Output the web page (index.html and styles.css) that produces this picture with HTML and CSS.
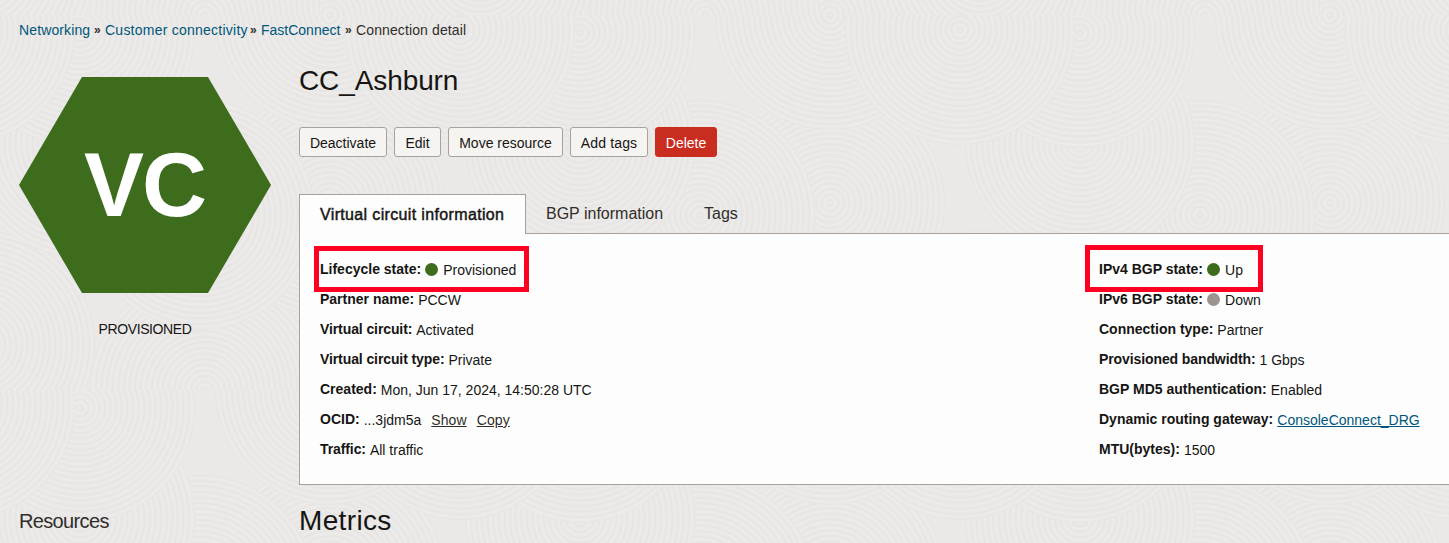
FILE: index.html
```html
<!DOCTYPE html>
<html lang="en">
<head>
<meta charset="utf-8">
<title>Connection detail</title>
<link rel="stylesheet" href="styles.css">
</head>
<body>
<svg class="texture" width="1449" height="543" aria-hidden="true">
  <defs>
    <radialGradient id="ring" gradientUnits="userSpaceOnUse" cx="0" cy="0" r="5.6" spreadMethod="repeat">
      <stop offset="0" stop-color="#edecea"/><stop offset=".5" stop-color="#e6e5e3"/><stop offset="1" stop-color="#edecea"/>
    </radialGradient>
    <circle id="swirl" r="115" fill="url(#ring)"/>
    <pattern id="sand" width="500" height="375" patternUnits="userSpaceOnUse" x="-170" y="15">
      <rect width="500" height="375" fill="#eae9e7"/>
      <use href="#swirl" x="0" y="375"/><use href="#swirl" x="500" y="375"/>
      <use href="#swirl" x="375" y="375"/><use href="#swirl" x="150" y="330"/>
      <use href="#swirl" x="0" y="188"/><use href="#swirl" x="500" y="188"/>
      <use href="#swirl" x="370" y="200"/><use href="#swirl" x="250" y="128"/>
      <use href="#swirl" x="0" y="0"/><use href="#swirl" x="500" y="0"/>
      <use href="#swirl" x="250" y="18"/><use href="#swirl" x="130" y="15"/>
    </pattern>
  </defs>
  <rect width="1449" height="543" fill="url(#sand)"/>
</svg>
<div class="page">
  <nav class="crumbs">
    <a class="crumb-1">Networking</a><i>»</i><a class="crumb-2">Customer connectivity</a><i>»</i><a class="crumb-3">FastConnect</a><i>»</i><span class="crumb-4">Connection detail</span>
  </nav>
  <div class="layout">
    <aside class="side">
      <div class="hexagon"><span>VC</span></div>
      <div class="status">PROVISIONED</div>
      <h2 class="resources">Resources</h2>
    </aside>
    <main class="main">
      <h1>CC_Ashburn</h1>
      <div class="actions">
        <button class="w-deactivate">Deactivate</button>
        <button class="w-edit">Edit</button>
        <button class="w-move">Move resource</button>
        <button class="w-tags">Add tags</button>
        <button class="w-delete">Delete</button>
      </div>
      <div class="tabs">
        <div class="tab active">Virtual circuit information</div>
        <div class="tab">BGP information</div>
        <div class="tab">Tags</div>
      </div>
      <section class="panel">
        <div class="column">
          <div class="row"><b>Lifecycle state:</b><em class="dot"></em><span>Provisioned</span><div class="mark mark-left"></div></div>
          <div class="row"><b>Partner name:</b><span>PCCW</span></div>
          <div class="row"><b class="tight">Virtual circuit:</b><span>Activated</span></div>
          <div class="row"><b class="tight">Virtual circuit type:</b><span>Private</span></div>
          <div class="row"><b>Created:</b><span>Mon, Jun 17, 2024, 14:50:28 UTC</span></div>
          <div class="row"><b>OCID:</b><span>...3jdm5a</span><a class="tool">Show</a><a class="tool">Copy</a></div>
          <div class="row"><b class="tight">Traffic:</b><span>All traffic</span></div>
        </div>
        <div class="column">
          <div class="row"><b>IPv4 BGP state:</b><em class="dot"></em><span>Up</span><div class="mark mark-right"></div></div>
          <div class="row"><b>IPv6 BGP state:</b><em class="dot down"></em><span>Down</span></div>
          <div class="row"><b>Connection type:</b><span>Partner</span></div>
          <div class="row"><b class="tight">Provisioned bandwidth:</b><span>1 Gbps</span></div>
          <div class="row"><b>BGP MD5 authentication:</b><span>Enabled</span></div>
          <div class="row"><b>Dynamic routing gateway:</b><a class="link">ConsoleConnect_DRG</a></div>
          <div class="row"><b>MTU(bytes):</b><span>1500</span></div>
        </div>
      </section>
      <h2 class="metrics">Metrics</h2>
    </main>
  </div>
</div>
</body>
</html>
```
FILE: styles.css
```css
* { box-sizing: border-box; }
body {
  margin: 0;
  height: 543px;
  overflow: hidden;
  background: #eae9e7;
  color: #161513;
  font: 14px/20px "Liberation Sans", Arial, sans-serif;
}
.texture { position: absolute; top: 0; left: 0; z-index: -1; }
.page { height: 543px; overflow: hidden; }
h1, h2 { margin: 0; font-weight: 400; }

.crumbs { display: flex; height: 60px; padding: 20px 0 0 19px; color: #312d2a; white-space: nowrap; }
.crumbs a { color: #00567a; }
.crumbs i { width: 15px; padding-left: 4px; font-size: 12px; font-style: normal; font-weight: 700; }
.crumb-1 { width: 71px; letter-spacing: .12px; }
.crumb-2 { width: 141px; letter-spacing: .24px; }
.crumb-3 { width: 80px; }
.crumb-4 { letter-spacing: .12px; }

.layout { display: grid; grid-template-columns: 252px 1150px; column-gap: 28px; padding-left: 19px; }
.side { padding-top: 17px; }
.hexagon {
  display: flex;
  align-items: center;
  justify-content: center;
  height: 216px;
  background: #3d6c1d;
  clip-path: polygon(25% 0, 75% 0, 100% 50%, 75% 100%, 25% 100%, 0 50%);
  color: #fff;
  font-size: 90px;
  line-height: 100px;
  font-weight: 700;
  letter-spacing: -2px;
}
.hexagon span { margin: 0 -1px 1px 0; transform: translateX(-1px); }
.status { margin-top: 26px; text-align: center; letter-spacing: -.4px; }
.resources { margin-top: 170px; font-size: 20px; line-height: 24px; letter-spacing: -.65px; color: #312d2a; }

h1 { height: 67px; padding-top: 4px; font-size: 28px; line-height: 34px; letter-spacing: -.1px; }
.actions { display: flex; gap: 7px; height: 67px; }
button {
  height: 30px;
  padding: 2px 0 0;
  border: 1px solid #aaa19d;
  border-radius: 3px;
  background: #f5f4f1;
  color: #161513;
  font: inherit;
  white-space: nowrap;
}
.w-deactivate { width: 88px; }
.w-edit { width: 47px; }
.w-move { width: 115px; }
.w-tags { width: 78px; letter-spacing: .15px; }
.w-delete { width: 62px; border-color: #c92d20; background: #c92d20; color: #fff; }

.tabs { display: flex; height: 39px; font-size: 16px; line-height: 40px; color: #312d2a; }
.tab { width: 158px; padding-left: 20px; white-space: nowrap; }
.tab.active {
  z-index: 1;
  width: 227px;
  height: 40px;
  border: 1px solid #a8a19b;
  border-bottom: 0;
  background: #fdfdfd;
  color: #161513;
  letter-spacing: .35px;
  -webkit-text-stroke: .45px #161513;
}
.panel {
  display: grid;
  grid-template-columns: 779px 351px;
  height: 252px;
  padding: 20px 0 0 20px;
  border: 1px solid #a8a19b;
  border-right: 0;
  background: #fdfdfd;
}
.row { position: relative; display: flex; align-items: center; height: 30px; white-space: nowrap; }
.row b { padding-bottom: 1px; }
.tight { letter-spacing: -.1px; }
.row span, .row .link { margin-left: 4px; padding-top: 1px; }
.dot { width: 13px; height: 13px; margin: 1px 1px 0 4px; border-radius: 50%; background: #3d6c1d; }
.dot.down { background: #9c948f; }
.link { color: #00567a; text-decoration: underline; }
.tool { margin-left: 10px; padding-top: 1px; color: #312d2a; text-decoration: underline; letter-spacing: .1px; }
.mark { position: absolute; border: 5px solid #ff0022; }
.mark-left { left: -6px; top: -8px; width: 215px; height: 46px; }
.mark-right { left: -14px; top: -9px; width: 178px; height: 47px; }
.metrics { margin-top: 19px; font-size: 28px; line-height: 34px; letter-spacing: .35px; }
```
